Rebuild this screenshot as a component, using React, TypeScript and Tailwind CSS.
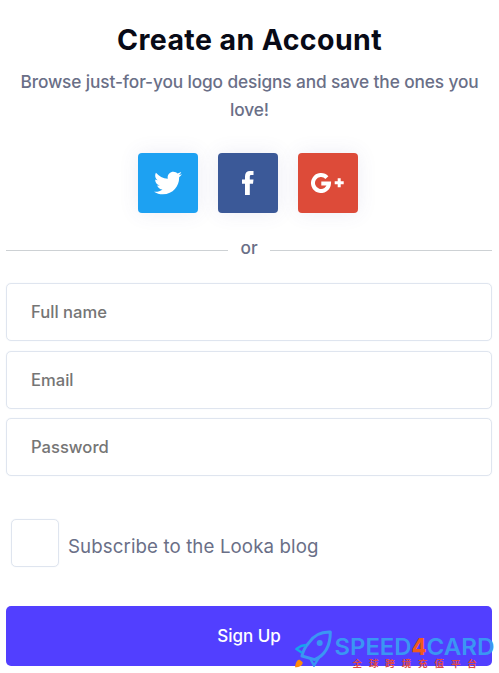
import { useState } from 'react';
import { FaTwitter } from 'react-icons/fa';

const fields = [
  { name: 'name', type: 'text', placeholder: 'Full name' },
  { name: 'email', type: 'email', placeholder: 'Email' },
  { name: 'password', type: 'password', placeholder: 'Password' },
];

function FacebookIcon() {
  return (
    <svg width="12" height="24" viewBox="0 0 12 24" fill="white">
      <path d="M3 24V12.8H0V8.5H3V5.2C3 1.8 5 0 8 0H11.5V4.1H9.3C8.1 4.1 7.8 4.7 7.8 5.7V8.5H11.5L11 12.8H7.8V24Z" />
    </svg>
  );
}

function GooglePlusIcon() {
  return (
    <svg width="34" height="20" viewBox="0 0 34 20" fill="none" stroke="white">
      <path d="M15.9 4.6A8 8 0 1 0 18 10.4H10.3" strokeWidth="4" />
      <path d="M28.2 5.3v9M23.7 9.8h9" strokeWidth="3" />
    </svg>
  );
}

function RocketIcon() {
  return (
    <svg className="shrink-0" width="38" height="39" viewBox="0 0 114 117" fill="none" strokeLinejoin="round">
      <path d="M109 6C79 5 58 17 44 39C33 51 27 63 24 78L62 89C92 76 109 50 109 6Z" stroke="#3b96f3" strokeWidth="9" />
      <path d="M36 45L21 48L7 57L24 68" stroke="#14a5ed" strokeWidth="7" />
      <path d="M49 86L60 107L78 78" stroke="#3b96f3" strokeWidth="7" />
      <circle cx="77" cy="39" r="9" fill="#3b96f3" />
      <path d="M3 112C5 97 9 89 17 89L26 97C26 107 17 112 3 112Z" fill="#ff8a0a" />
    </svg>
  );
}

function Watermark() {
  return (
    <div className="pointer-events-none absolute top-[630px] left-[294px] flex">
      <RocketIcon />
      <svg className="overflow-visible" width="166" height="39" viewBox="0 0 166 39">
        <text x="2.5" y="25" textLength="77" lengthAdjust="spacingAndGlyphs" className="fill-[#3b96f3] font-['Inter',sans-serif] text-[23px] font-semibold">SPEED</text>
        <text x="79.5" y="25" textLength="15" lengthAdjust="spacingAndGlyphs" className="fill-[#f15a1c] font-['Inter',sans-serif] text-[23px] font-extrabold">4</text>
        <text x="94.5" y="25" textLength="68" lengthAdjust="spacingAndGlyphs" className="fill-[#3b96f3] font-['Inter',sans-serif] text-[23px] font-semibold">CARD</text>
        <text x="20.5" y="36.5" className="fill-[#e04a45] font-['Noto_Sans_CJK_SC',sans-serif] text-[9.5px] font-bold tracking-[6.9px]">全球跨境充值平台</text>
      </svg>
    </div>
  );
}

export default function App() {
  const [subscribed, setSubscribed] = useState(false);

  return (
    <div className="relative h-[673px] w-[499px] overflow-hidden bg-white px-[6px] pt-5 font-['Inter',sans-serif] font-medium text-[#6a6f87]">
      <h1 className="text-center text-[28.5px] leading-10 font-bold tracking-[0.4px] text-[#080a16]">Create an Account</h1>
      <p className="mt-2 text-center text-[17.3px] leading-7 tracking-[-0.12px]">
        Browse just-for-you logo designs and save the ones you love!
      </p>

      {/* Social sign up */}
      <div className="mt-[29px] flex justify-center gap-5 pr-[3px]">
        <button aria-label="Twitter" className="flex size-[60px] items-center justify-center rounded-[4px] bg-[#1da1f2] text-white shadow-[0_0_20px_rgba(80,80,160,0.1)]">
          <FaTwitter size={28} />
        </button>
        <button aria-label="Facebook" className="flex size-[60px] items-center justify-center rounded-[4px] bg-[#3b5998] shadow-[0_0_20px_rgba(80,80,160,0.1)]">
          <FacebookIcon />
        </button>
        <button aria-label="Google Plus" className="flex size-[60px] items-center justify-center rounded-[4px] bg-[#dd4b39] shadow-[0_0_20px_rgba(80,80,160,0.1)]">
          <GooglePlusIcon />
        </button>
      </div>

      <div className="mt-[22px] flex h-7 items-center gap-3 pr-px text-[17.3px]">
        <span className="mt-[3px] h-px flex-1 bg-[#cdd1d4]" />
        <span className="-mt-[3px]">or</span>
        <span className="mt-[3px] h-px flex-1 bg-[#cdd1d4]" />
      </div>

      <form onSubmit={(e) => e.preventDefault()}>
        <div className="mt-5 flex flex-col gap-[9.5px] pr-px">
          {fields.map((field) => (
            <input
              key={field.name}
              type={field.type}
              name={field.name}
              placeholder={field.placeholder}
              className="h-[58px] w-full rounded-[5px] border border-[#dfe5ef] px-6 text-[16.6px] shadow-[0_0_1px_#dfe5ef] outline-none placeholder:text-[#757575]"
            />
          ))}
        </div>

        <label className="mt-[43px] ml-[5px] flex items-center text-[18.7px] font-normal">
          <input
            type="checkbox"
            checked={subscribed}
            onChange={(e) => setSubscribed(e.target.checked)}
            className="size-[48px] appearance-none rounded-[5px] border border-[#dfe5ef] shadow-[0_0_1px_#dfe5ef] checked:bg-[#523fff]"
          />
          <span className="mt-[8px] ml-[9px] tracking-[0.1px]">Subscribe to the Looka blog</span>
        </label>

        <button className="mt-[39px] h-[60px] w-[486px] rounded-[5px] bg-[#523fff] pt-px text-[17px] text-white">Sign Up</button>
      </form>

      <Watermark />
    </div>
  );
}
